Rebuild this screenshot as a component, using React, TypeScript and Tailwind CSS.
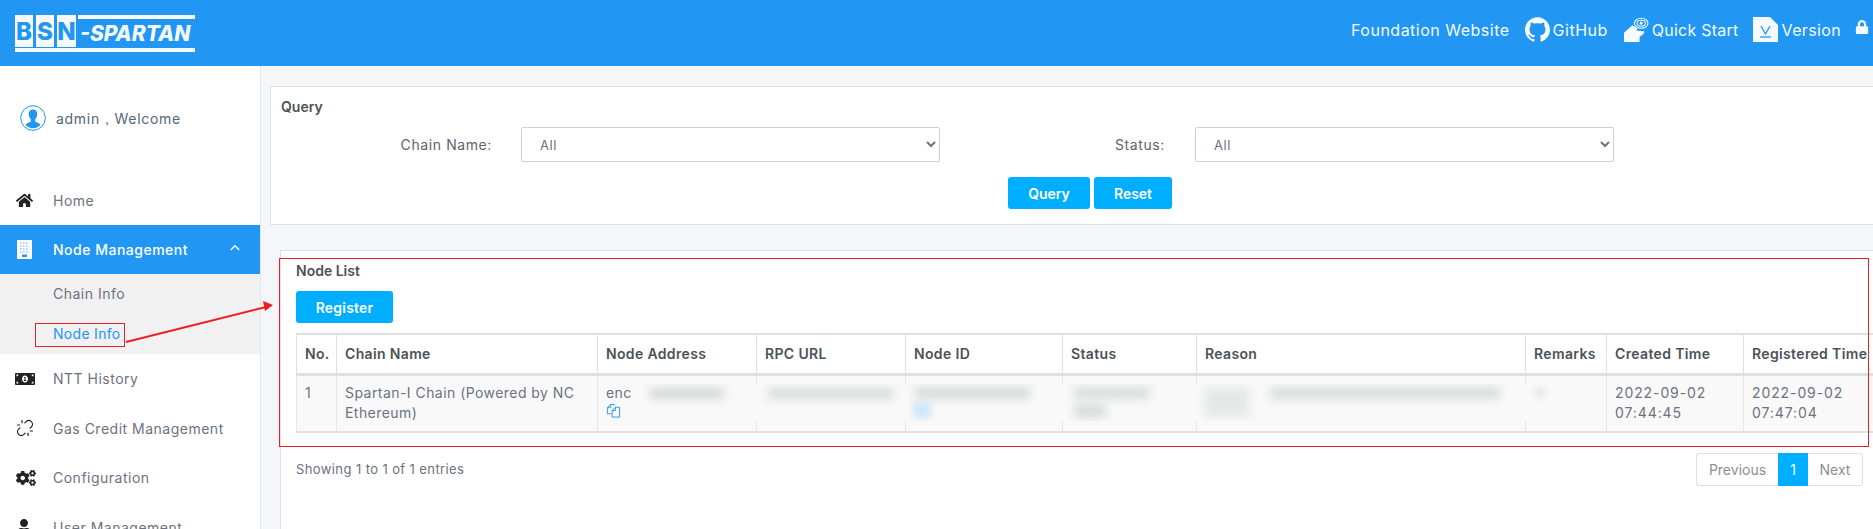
import React from "react";
import { FaCogs, FaHome, FaLock, FaMoneyBillAlt, FaUser } from "react-icons/fa";
import { FaAngleUp } from "react-icons/fa6";
import { SiGithub } from "react-icons/si";
import { Unlink } from "lucide-react";

const columns = [
  { name: "No.", width: "w-[40px]" },
  { name: "Chain Name", width: "w-[261px]" },
  { name: "Node Address", width: "w-[159px]" },
  { name: "RPC URL", width: "w-[149px]" },
  { name: "Node ID", width: "w-[157px]" },
  { name: "Status", width: "w-[134px]" },
  { name: "Reason", width: "w-[329px]" },
  { name: "Remarks", width: "w-[81px]" },
  { name: "Created Time", width: "w-[137px]" },
  { name: "Registered Time", width: "w-[137px]" },
];

const Logo = () => (
  <div className="relative w-[180px] h-[37px] text-[#2196f3] tracking-normal">
    <div className="flex gap-[3px] h-[32px] font-extrabold text-[24px] leading-[34px] text-center">
      <span className="w-[18px] bg-[#f7f9fb]">B</span>
      <span className="w-[18px] bg-[#f7f9fb]">S</span>
      <span className="w-[19px] bg-[#f7f9fb]">N</span>
    </div>
    <div className="absolute left-[63px] top-0 right-0 h-[4px] bg-[#f7f9fb]" />
    <div className="absolute left-0 bottom-0 right-0 h-[4px] bg-[#f7f9fb]" />
    <span className="absolute left-[65px] top-[4px] text-[21px] leading-[29px] font-extrabold italic text-[#f2f8fe] whitespace-nowrap">
      -SPARTAN
    </span>
  </div>
);

const Header = () => (
  <header className="h-[66px] shrink-0 bg-[#2196f3] flex items-center justify-between pl-[15px] pr-[4px] text-[#f5faff] text-[16px] tracking-[0.5px]">
    <Logo />
    <div className="flex items-center pb-[7px]">
      <span className="mr-[15px]">Foundation Website</span>
      <SiGithub className="size-[25px] mr-[3px]" />
      <span className="mr-[16px]">GitHub</span>
      <svg viewBox="0 0 24 24" className="size-[25px] mr-[3px]" fill="none" stroke="currentColor">
        <ellipse cx="16.5" cy="6" rx="6.5" ry="4.8" strokeWidth="1" />
        <ellipse cx="16.5" cy="6" rx="4" ry="2.8" strokeWidth="1" />
        <circle cx="16.5" cy="6" r="1.4" fill="currentColor" stroke="none" />
        <path d="M0 24v-9l8-7 5 3-1 2 8 1-2 3-3 2v5z" fill="currentColor" stroke="none" />
      </svg>
      <span className="mr-[14px] tracking-[0.25px]">Quick Start</span>
      <svg viewBox="0 0 25 25" className="size-[25px] mr-[4px]">
        <path d="M0 0h17l8 8v17H0z" fill="currentColor" />
        <path d="M8 9l4.500 8L17 9" fill="none" stroke="#2196f3" strokeWidth="1.3" />
        <path d="M7 20h11" stroke="#2196f3" strokeWidth="1.3" />
      </svg>
      <span className="mr-[14px] tracking-[0.35px]">Version</span>
      <FaLock className="size-[14px] mb-[5px]" />
    </div>
  </header>
);

const NavItem: React.FC<{ icon: React.ReactNode; label: string; height: string }> = ({ icon, label, height }) => (
  <div className={`${height} flex items-center text-[#6b7280] text-[14px] tracking-[0.5px] pb-[1px]`}>
    <span className="w-[53px] pl-[16px] text-[#222] flex">{icon}</span>
    {label}
  </div>
);

const Sidebar = () => (
  <aside className="w-[261px] shrink-0 bg-white border-r border-[#e3e5ea]">
    <div className="h-[110px] pl-[20px] pb-[6px] flex items-center gap-[10px] text-[#54667a] text-[14px] tracking-[0.7px]">
      <svg viewBox="0 0 26 26" className="size-[26px]">
        <circle cx="13" cy="13" r="12.3" fill="none" stroke="#2196f3" />
        <path
          d="M13 4.500c-3 0-4.400 2.300-4.200 5 .1 2 1 3.600 2 4.700v2.300c-1.800 1.200-4.400 1.400-5.300 3.600 1.800 2 4.500 3.200 7.500 3.200s5.700-1.200 7.500-3.200c-.9-2.200-3.500-2.400-5.300-3.600v-2.300c1-1.100 1.900-2.700 2-4.700.2-2.700-1.200-5-4.200-5z"
          fill="#2196f3"
        />
      </svg>
      <span>admin，Welcome</span>
    </div>
    <NavItem icon={<FaHome className="size-[17px]" />} label="Home" height="h-[49px]" />
    <div className="h-[49px] bg-[#2196f3] text-white font-medium text-[14px] tracking-[0.5px] flex items-center pb-[1px]">
      <span className="w-[53px] pl-[17px] flex">
        <svg viewBox="0 0 15 19" className="w-[15px] h-[19px]">
          <path d="M0 0h15v19H0z" fill="#fff" />
          <path d="M3 3h9M3 6h9M3 9h9M3 12h9" stroke="#90caf9" strokeWidth="1.4" strokeDasharray="1.500 1.500" />
          <path d="M5 14.500h5V17H5z" fill="#2196f3" />
        </svg>
      </span>
      <span className="flex-1">Node Management</span>
      <FaAngleUp className="size-[12px] mr-[19px] mb-[3px]" />
    </div>
    <div className="h-[80px] bg-[#f1f1f2] pl-[53px] text-[14px] tracking-[0.5px]">
      <div className="h-[40px] flex items-center pb-[1px] text-[#6b7280]">Chain Info</div>
      <div className="h-[40px] flex items-center pb-[1px] text-[#2196f3] tracking-[0.3px]">Node Info</div>
    </div>
    <NavItem icon={<FaMoneyBillAlt className="size-[20px] -ml-[1px]" />} label="NTT History" height="h-[50px]" />
    <NavItem icon={<Unlink className="size-[18px]" strokeWidth={1.6} />} label="Gas Credit Management" height="h-[49px]" />
    <NavItem icon={<FaCogs className="size-[20px]" />} label="Configuration" height="h-[50px]" />
    <NavItem icon={<FaUser className="size-[16px]" />} label="User Management" height="h-[49px]" />
  </aside>
);

const FilterSelect: React.FC<{ width: string }> = ({ width }) => (
  <select className={`${width} h-[35px] bg-white border border-[#cfd0d8] rounded-[2px] pl-[14px] text-[13px] text-[#6b7280]`}>
    <option>All</option>
  </select>
);

const QueryCard = () => (
  <section className="ml-[9px] h-[139px] bg-white border-y border-l border-[#dfe0e3] pl-[10px] pt-[11px]">
    <h2 className="text-[14px] leading-[18px] font-semibold text-[#4c5258]">Query</h2>
    <div className="flex items-center mt-[11px] text-[14px] tracking-[0.6px] text-[#5f6368]">
      <label className="w-[211px] text-right">Chain Name:</label>
      <div className="ml-[29px]">
        <FilterSelect width="w-[419px]" />
      </div>
      <label className="w-[225px] text-right">Status:</label>
      <div className="ml-[30px]">
        <FilterSelect width="w-[419px]" />
      </div>
    </div>
    <div className="flex gap-[4px] mt-[15px] ml-[727px] text-[14px] font-semibold text-white">
      <button className="w-[82px] h-[32px] bg-[#00aeff] rounded-[3px]">Query</button>
      <button className="w-[78px] h-[32px] bg-[#00aeff] rounded-[3px]">Reset</button>
    </div>
  </section>
);

const NodeTable = () => (
  <table className="table-fixed w-[1584px] border-collapse text-[14px] tracking-[0.45px] text-[#6b7280]">
    <colgroup>
      {columns.map((c) => (
        <col key={c.name} className={c.width} />
      ))}
    </colgroup>
    <thead>
      <tr className="h-[40px]">
        {columns.map((c) => (
          <th
            key={c.name}
            className="border-x border-[#dfe0e3] border-t-2 border-b-[3px] px-[8px] text-left text-[14px] tracking-[0.35px] font-semibold text-[#4c5258] whitespace-nowrap overflow-hidden"
          >
            {c.name}
          </th>
        ))}
      </tr>
    </thead>
    <tbody>
      <tr className="h-[58px] bg-[#f9f9f9] border-b-2 border-[#dfe0e3] leading-[20px]">
        <td className="border-x border-[#e6e6e6] px-[8px] align-top pt-[7px]">1</td>
        <td className="border-x border-[#e6e6e6] px-[8px] align-top pt-[7px]">Spartan-I Chain (Powered by NC Ethereum)</td>
        <td className="border-x border-[#e6e6e6] px-[8px] align-top pt-[7px]">
          enc
          <svg viewBox="0 0 16 16" className="size-[15px] text-[#2196f3]" fill="none" stroke="currentColor">
            <path d="M5 1.500 1.500 5v6.500h4M5 1.500V5H1.500M5 1.500h4l1 1" />
            <path d="M10 4.500 6.500 8v7h8V4.500zM10 4.500V8H6.500" />
          </svg>
        </td>
        <td className="border-x border-[#e6e6e6]" />
        <td className="border-x border-[#e6e6e6]" />
        <td className="border-x border-[#e6e6e6]" />
        <td className="border-x border-[#e6e6e6]" />
        <td className="border-x border-[#e6e6e6]" />
        <td className="border-x border-[#e6e6e6] px-[8px] align-top pt-[7px] tracking-[0.9px]">
          2022-09-02
          <br />
          07:44:45
        </td>
        <td className="border-x border-[#e6e6e6] px-[8px] align-top pt-[7px] tracking-[0.9px]">
          2022-09-02
          <br />
          07:47:04
        </td>
      </tr>
    </tbody>
  </table>
);

const Pagination = () => (
  <div className="flex h-[33px] text-[14px] text-[#8a8f94]">
    <span className="w-[82px] flex items-center justify-center border border-r-0 border-[#dfe0e3] rounded-l-[3px] bg-white">Previous</span>
    <span className="w-[30px] flex items-center justify-center bg-[#00aeff] text-white">1</span>
    <span className="w-[55px] flex items-center justify-center border border-l-0 border-[#dfe0e3] rounded-r-[3px] bg-white">Next</span>
  </div>
);

const NodeListCard = () => (
  <section className="ml-[19px] mt-[25px] flex-1 bg-white border-t border-l border-[#dfe0e3] pl-[15px] overflow-hidden">
    <h2 className="mt-[11px] text-[14px] leading-[18px] font-semibold text-[#4c5258]">Node List</h2>
    <button className="block mt-[11px] w-[97px] h-[32px] bg-[#00aeff] rounded-[3px] text-[14px] font-semibold tracking-[0.2px] text-white">Register</button>
    <div className="mt-[10px]">
      <NodeTable />
    </div>
    <div className="w-[1567px] mt-[20px] flex items-center justify-between">
      <span className="text-[13px] tracking-[0.4px] text-[#6b7280]">Showing 1 to 1 of 1 entries</span>
      <Pagination />
    </div>
  </section>
);

// blurred-out values laid over the table row
const Redactions = () => (
  <div className="absolute left-[632px] top-[384px] w-[970px] h-[37px] bg-[#f9f9f9] overflow-hidden">
    <div className="absolute left-[18px] top-[4px] w-[74px] h-[11px] bg-[#d4d6d6] blur-[5px]" />
    <div className="absolute left-[136px] top-[4px] w-[126px] h-[11px] bg-[#d8dada] blur-[5px]" />
    <div className="absolute left-[283px] top-[3px] w-[115px] h-[12px] bg-[#d8dada] blur-[5px]" />
    <div className="absolute left-[281px] top-[18px] w-[18px] h-[16px] bg-[#cfe6fa] blur-[3px]" />
    <div className="absolute left-[442px] top-[3px] w-[76px] h-[12px] bg-[#dadcdc] blur-[5px]" />
    <div className="absolute left-[442px] top-[20px] w-[32px] h-[14px] bg-[#dadcdc] blur-[5px]" />
    <div className="absolute left-[572px] top-[3px] w-[46px] h-[31px] bg-[#e6e8e8] blur-[5px]" />
    <div className="absolute left-[638px] top-[3px] w-[230px] h-[12px] bg-[#dadcdc] blur-[5px]" />
    <div className="absolute left-[903px] top-[4px] w-[10px] h-[10px] bg-[#e6e7e7] blur-[3px]" />
  </div>
);

const Annotations = () => (
  <>
    <div className="absolute left-[279px] top-[258px] w-[1590px] h-[189px] border border-[#ee1c25]" />
    <div className="absolute left-[35px] top-[323px] w-[90px] h-[24px] border border-[#e0242c]" />
    <svg className="absolute left-[120px] top-[295px]" width="160" height="55" viewBox="0 0 160 55">
      <path d="M6 47 146 12" stroke="#ee1c25" strokeWidth="2" />
      <path d="M153 10 143 6 145 16z" fill="#ee1c25" />
    </svg>
  </>
);

const App: React.FC = () => {
  return (
    <div className="relative w-full h-screen overflow-hidden flex flex-col bg-[#f5f6fa] font-['Inter','Noto_Sans',sans-serif]">
      <Header />
      <div className="flex flex-1 min-h-0">
        <Sidebar />
        <main className="flex-1 min-w-0 pt-[20px] flex flex-col overflow-hidden">
          <QueryCard />
          <NodeListCard />
        </main>
      </div>
      <Redactions />
      <Annotations />
    </div>
  );
};

export default App;
